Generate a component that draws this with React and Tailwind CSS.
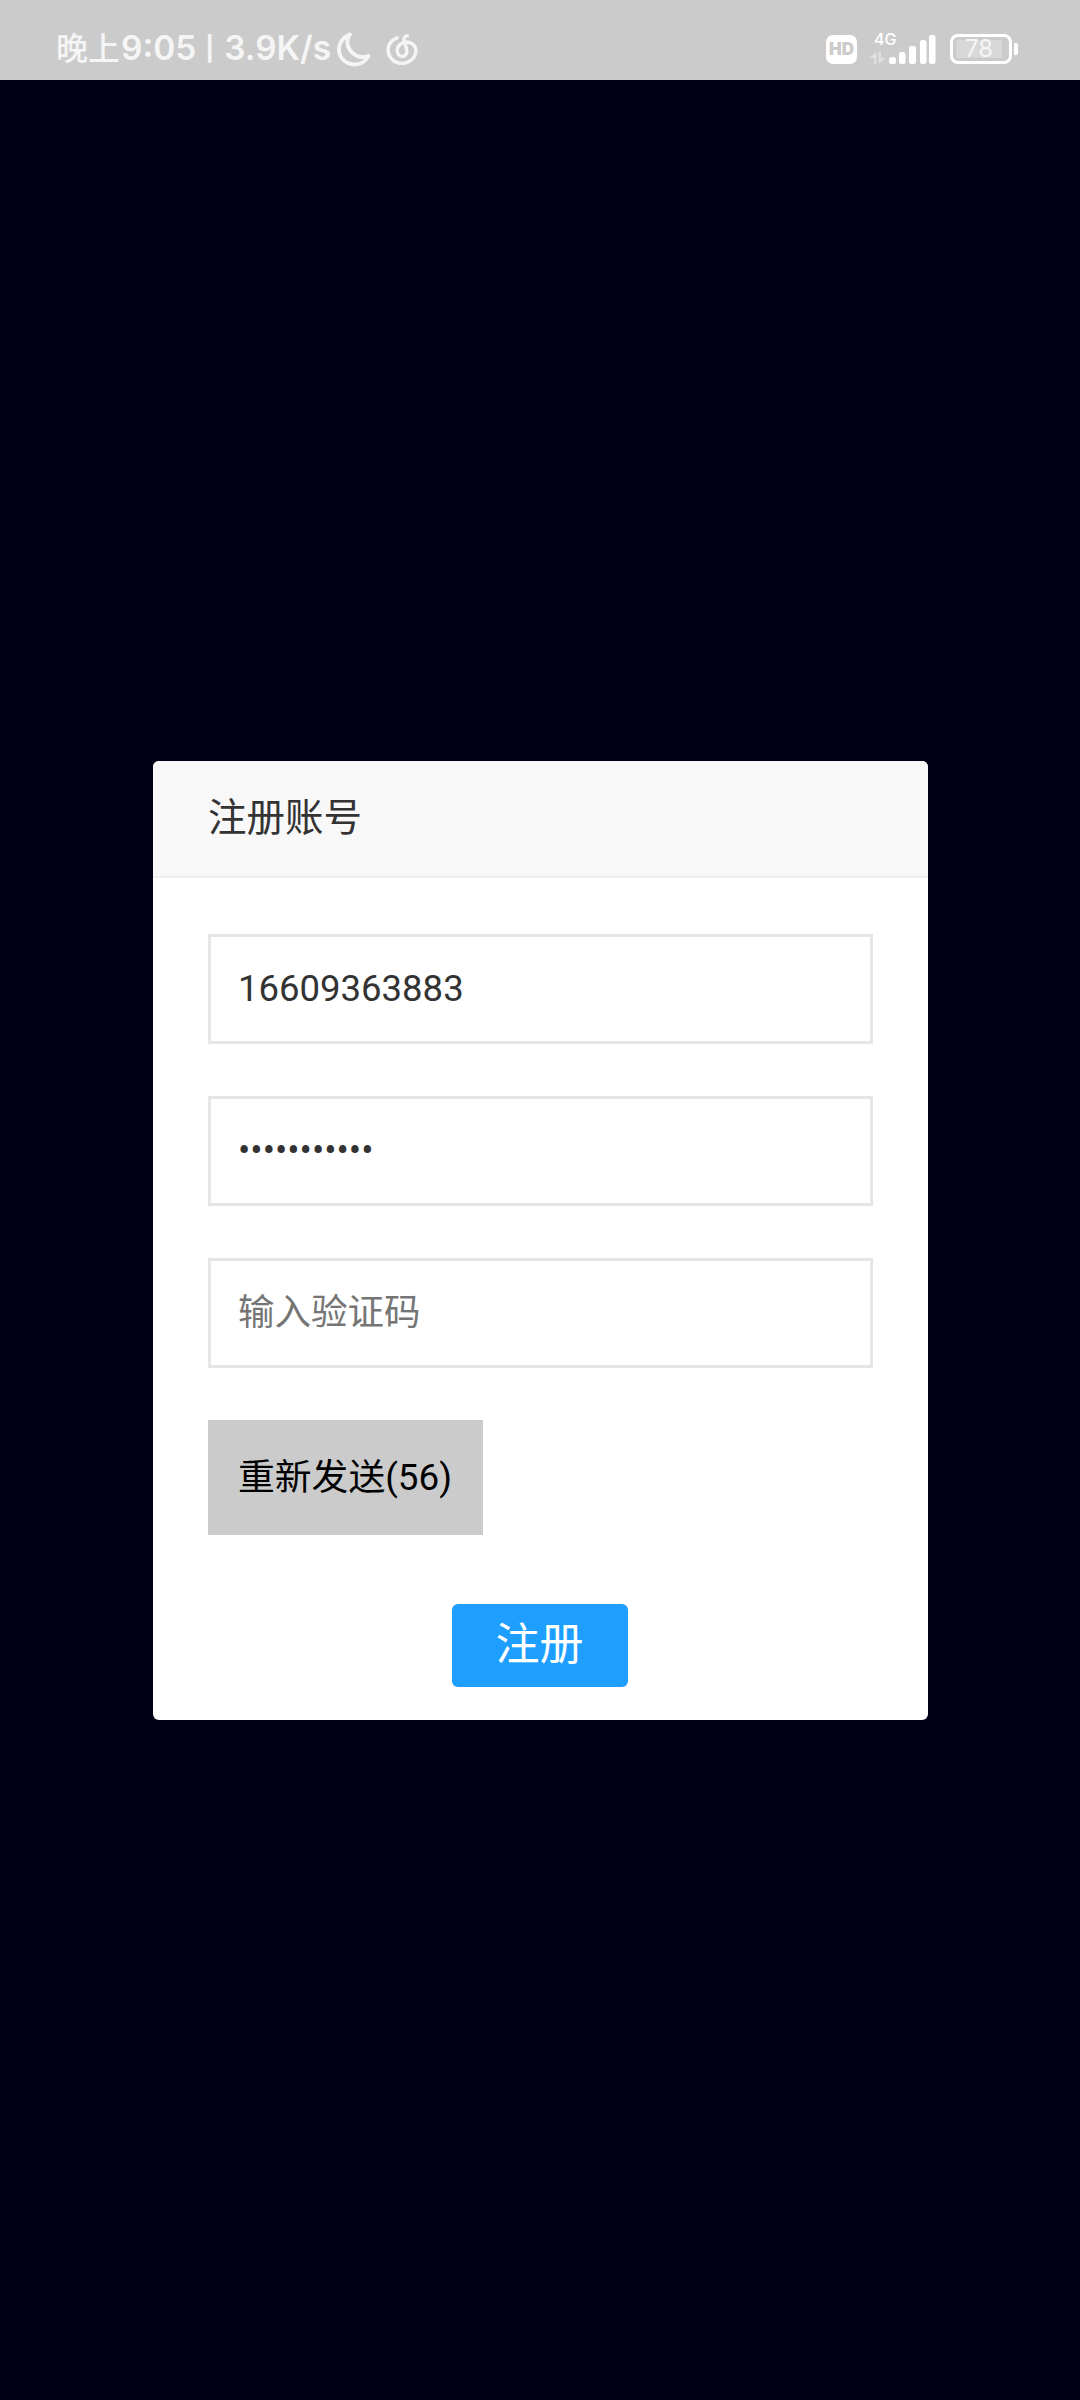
const cjk = "font-['Roboto','Noto_Sans_CJK_SC',sans-serif]";

function MoonIcon() {
  return (
    <svg width="36" height="36" viewBox="0 0 36 36" fill="none" stroke="#f5f5f5" strokeWidth="3.8" strokeLinecap="round" strokeLinejoin="round">
      <path d="M14 3.500C7.500 5.500 3 11.500 3 18.500 3 27 10 33.500 18.500 33.500c6 0 11.500-3.500 14-8.500-1.500.6-3.500 1-5.500 1C19 26 13 20 11.500 13.500 11 10 12 6 14 3.500Z" />
    </svg>
  );
}

function MusicIcon() {
  return (
    <svg width="32" height="32" viewBox="0 0 30 30" fill="none" stroke="#f5f5f5" strokeWidth="3.2" strokeLinecap="round">
      <path d="M10.500 4.500C5.500 6.500 2 10.500 2 16c0 7 5.800 12.500 13 12.500S28 23 28 16.500C28 12 24 8.500 19.500 8.500 14.500 8.500 10.500 12 10.500 16.500c0 3 2 5.500 4.500 5.500s4.500-2 4.500-4.500c0-3-1.500-7-2.500-10.500-.5-2 .5-4 3-4.500" />
    </svg>
  );
}

function SignalIcon() {
  return (
    <svg width="68" height="32" viewBox="0 0 68 32" fill="white">
      <path d="M7.500 19v12H5v-6H0ZM9.500 19H12v6h5l-7.500 6Z" opacity=".4" />
      <rect x="20" y="24" width="7" height="7" rx="2.500" />
      <rect x="30" y="19" width="6.500" height="12" rx="2.500" />
      <rect x="40" y="13" width="7" height="18" rx="2.500" />
      <rect x="51" y="7" width="6.500" height="24" rx="2.500" />
      <rect x="60" y="2" width="6.500" height="29" rx="2.500" />
    </svg>
  );
}

function StatusBar() {
  return (
    <div className="flex h-20 shrink-0 items-center justify-between bg-[#cbcbcb] pt-[18px] pr-[62px] pl-[56px] text-[#f5f5f5]">
      <div className="flex items-center">
        <span className="flex items-center font-['Inter','Noto_Sans_CJK_SC',sans-serif] text-[33.500px] leading-none font-semibold whitespace-nowrap">
          <span className="text-[32px] font-medium">晚上</span>
          <span className="ml-[1px]">9:05</span>
          <span className="ml-[9px] text-[24px] font-bold">|</span>
          <span className="ml-[10px]">3.9K/s</span>
        </span>
        <span className="ml-[5px]">
          <MoonIcon />
        </span>
        <span className="ml-[14px]">
          <MusicIcon />
        </span>
      </div>
      <div className="flex items-center">
        <div className="flex h-[29px] w-[31px] items-center justify-center rounded-[7px] bg-white font-['Inter',sans-serif] text-[17px] leading-none font-black text-[#cbcbcb]">
          HD
        </div>
        <div className="relative ml-[12px] h-[32px] w-[68px]">
          <span className="absolute -top-[2px] left-[5px] font-['Inter',sans-serif] text-[16px] leading-none font-medium text-white">
            4G
          </span>
          <SignalIcon />
        </div>
        <div className="ml-[13px] flex h-[30px] w-[62px] items-center rounded-[8px] border-[3px] border-white p-[3px]">
          <div className="relative h-full w-[46px] rounded-[2px] bg-[#d8d8d8]">
            <span className="absolute inset-0 flex items-center justify-center font-['Inter',sans-serif] text-[24px] leading-none text-[#f5f5f5]">
              78
            </span>
          </div>
        </div>
        <div className="ml-[2px] h-[12px] w-[4px] rounded-r-[2px] bg-white" />
      </div>
    </div>
  );
}

function Field({ type = "text", value, placeholder }) {
  return (
    <input
      type={type}
      defaultValue={value}
      placeholder={placeholder}
      readOnly
      className="block h-[110px] w-full border-[3px] border-[#e6e6e6] bg-white pb-[2px] pl-[27px] text-[36.500px] text-[#333] outline-none placeholder:text-[#757575]"
    />
  );
}

export default function App() {
  return (
    <div className={`flex min-h-[2400px] flex-col bg-[#000016] ${cjk}`}>
      <StatusBar />
      <div className="mt-[681px] ml-[153px] w-[775px]">
        <section className="overflow-hidden rounded-[6px] bg-white">
          <h1 className="flex h-[117px] items-center border-b-2 border-[#eeeeee] bg-[#f8f8f8] pb-[2px] pl-[55px] text-[38.500px] font-normal text-[#333]">
            注册账号
          </h1>
          <div className="px-[55px] pt-[56px] pb-[33px]">
            <div className="flex flex-col gap-[52px]">
              <Field value="16609363883" />
              <Field type="password" value="12345678901" />
              <Field placeholder="输入验证码" />
            </div>
            <button className="mt-[52px] block h-[115px] w-[275px] bg-[#cbcbcb] pl-[30px] text-left text-[36.800px] text-black">
              重新发送(56)
            </button>
            <div className="mt-[69px] flex justify-center pr-[2px]">
              <button className="h-[83px] w-[176px] rounded-[6px] bg-[#1e9fff] pb-[2px] text-[44px] text-white">
                注册
              </button>
            </div>
          </div>
        </section>
      </div>
    </div>
  );
}
